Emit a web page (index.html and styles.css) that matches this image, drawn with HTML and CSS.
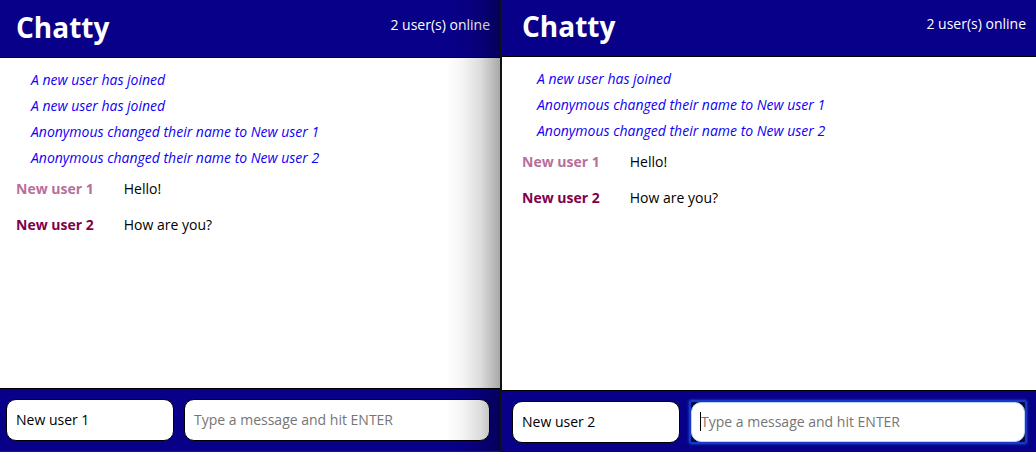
FILE: index.html
```html
<!DOCTYPE html>
<html lang="en">
<head>
<meta charset="utf-8">
<title>Chatty</title>
<link rel="stylesheet" href="styles.css">
</head>
<body>
<main class="desktop">
  <section class="chat chat-back" aria-label="Chat of New user 1">
    <header class="chat-header">
      <h1 class="chat-title">Chatty</h1>
      <p class="chat-online">2 user(s) online</p>
    </header>
    <div class="chat-log">
      <p class="notice">A new user has joined</p>
      <p class="notice">A new user has joined</p>
      <p class="notice">Anonymous changed their name to New user 1</p>
      <p class="notice">Anonymous changed their name to New user 2</p>
      <p class="message"><span class="author author-one">New user 1</span><span>Hello!</span></p>
      <p class="message"><span class="author author-two">New user 2</span><span>How are you?</span></p>
    </div>
    <form class="chat-bar">
      <input class="field field-name" type="text" value="New user 1" aria-label="Your name">
      <div class="field-wrap">
        <input class="field" type="text" placeholder="Type a message and hit ENTER" aria-label="Message">
      </div>
    </form>
  </section>
  <section class="chat chat-front" aria-label="Chat of New user 2">
    <header class="chat-header">
      <h1 class="chat-title">Chatty</h1>
      <p class="chat-online">2 user(s) online</p>
    </header>
    <div class="chat-log">
      <p class="notice">A new user has joined</p>
      <p class="notice">Anonymous changed their name to New user 1</p>
      <p class="notice">Anonymous changed their name to New user 2</p>
      <p class="message"><span class="author author-one">New user 1</span><span>Hello!</span></p>
      <p class="message"><span class="author author-two">New user 2</span><span>How are you?</span></p>
    </div>
    <form class="chat-bar">
      <input class="field field-name" type="text" value="New user 2" aria-label="Your name">
      <div class="field-wrap">
        <input class="field field-active" type="text" placeholder="Type a message and hit ENTER" aria-label="Message">
        <span class="caret"></span>
      </div>
    </form>
  </section>
</main>
</body>
</html>
```
FILE: styles.css
```css
* {
  box-sizing: border-box;
}

body {
  margin: 0;
  font-family: "Open Sans", "Noto Sans", sans-serif;
  font-size: 14px;
  line-height: 20px;
  color: #000;
}

h1,
p {
  margin: 0;
}

.desktop {
  display: flex;
  height: 100vh;
  overflow: hidden;
  background: #111;
}

.chat {
  --edge: 6px;
  --header-height: 58px;
  position: relative;
  display: flex;
  flex-direction: column;
  min-width: 0;
  background: #fff;
}

.chat-back {
  flex: 500 1 0;
  border-bottom: 1px solid #222;
}

/* Shadow cast by the window in front */
.chat-back::after {
  content: "";
  position: absolute;
  top: 0;
  right: 0;
  bottom: 0;
  width: 54px;
  background: linear-gradient(to right, rgba(0, 0, 0, 0), rgba(0, 0, 0, 0.04) 30%, rgba(0, 0, 0, 0.14) 65%, rgba(0, 0, 0, 0.34));
  pointer-events: none;
}

.chat-front {
  --edge: 10px;
  --header-height: 57px;
  flex: 534 1 0;
  margin-left: 2px;
}

.chat-header {
  display: flex;
  flex: none;
  align-items: flex-end;
  justify-content: space-between;
  height: var(--header-height);
  padding: 0 10px 10px calc(var(--edge) + 10px);
  border-bottom: 1px solid #000;
  background: #080088;
  color: #fff;
}

.chat-title {
  font-size: 28px;
  line-height: 40px;
}

.chat-online {
  padding-bottom: 12px;
}

.chat-log {
  flex: 1;
  min-height: 0;
  overflow: hidden;
  padding: 9px 10px 0 calc(var(--edge) + 10px);
}

.notice {
  padding: 3px 0 3px 15px;
  font-style: italic;
  color: #1000f4;
}

.message {
  display: flex;
  gap: 30px;
  padding: 8px 0;
}

.author {
  font-weight: 700;
}

.author-one {
  color: #b86e9c;
}

.author-two {
  color: #80004c;
}

.chat-bar {
  display: flex;
  flex: none;
  gap: 10px;
  padding: 10px 10px 10px var(--edge);
  border-top: 1px solid #000;
  background: #080088;
}

.chat-front .chat-bar {
  padding-bottom: 9px;
}

.field {
  display: block;
  width: 100%;
  height: 42px;
  padding: 0 9px 2px;
  border: 1px solid #000;
  border-radius: 10px;
  outline: none;
  background: #fff;
  color: #000;
  font: inherit;
}

.field::placeholder {
  color: #757575;
  opacity: 1;
}

.field-name {
  flex: none;
  width: 168px;
}

.field-wrap {
  position: relative;
  flex: 1;
  min-width: 0;
  border-radius: 2px;
}

.field-wrap:has(.field-active) {
  border: 1px solid #1838cc;
  background: #080840;
  box-shadow: 0 0 0 1px #1838cc, 0 0 2px 2px #1028aa;
}

.field-active {
  height: 40px;
  border-color: #bcd0f8;
}

.caret {
  position: absolute;
  top: 10px;
  left: 9px;
  width: 1px;
  height: 19px;
  background: #000;
}
```
